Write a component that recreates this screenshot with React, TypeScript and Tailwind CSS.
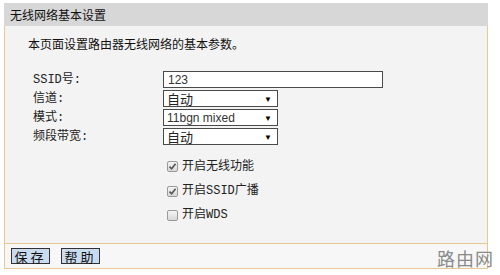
const cjk = "font-['Noto_Sans_CJK_SC',sans-serif]";
const mono = "font-['Liberation_Mono','Noto_Sans_CJK_SC',monospace]";

const Field = ({ label, children }: { label: string; children: React.ReactNode }) => (
  <div className="flex items-center h-[19px]">
    <span className={`w-[158px] shrink-0 pl-[28px] text-[12px] text-[#222] ${mono}`}>{label}</span>
    {children}
  </div>
);

const Select = ({ value, sans }: { value: string; sans?: boolean }) => (
  <div className="flex items-center justify-between w-[115px] h-[17px] border border-[#4a4a4a] bg-white pl-[3px] pr-[5px]">
    <span
      className={
        sans
          ? "text-[12px] text-[#333] font-['Liberation_Sans',sans-serif]"
          : `text-[13px] text-[#222] ${cjk}`
      }
    >
      {value}
    </span>
    <span className="text-[8px] text-black leading-none">▼</span>
  </div>
);

const Check = ({ label, on, h }: { label: string; on: boolean; h: string }) => (
  <div className={`flex items-center pl-[162px] ${h}`}>
    <span className="w-[11px] h-[11px] border border-[#9a9a9a] rounded-[2px] bg-gradient-to-b from-[#f4f4f4] to-[#d8d8d8] flex items-center justify-center">
      {on && (
        <svg width="9" height="9" viewBox="0 0 9 9">
          <path d="M1.5 4.6 L3.6 6.8 L7.6 1.8" stroke="#555" strokeWidth="1.6" fill="none" />
        </svg>
      )}
    </span>
    <span className={`ml-[4px] text-[12px] text-[#222] ${mono}`}>{label}</span>
  </div>
);

export default function App() {
  return (
    <div className="w-[500px] h-[275px] bg-white pt-[3px] pl-[4px] relative overflow-hidden">
      <div className="w-[484px]">
        {/* header */}
        <div className={`h-[23px] bg-[#d7d7d7] flex items-center pl-[6px] text-[12px] text-[#111] ${cjk}`}>
          无线网络基本设置
        </div>

        {/* content */}
        <div className="h-[218px] bg-[#f3f3f3] border-x border-b border-[#e6c894] pt-[10px]">
          <div className={`pl-[23px] text-[12px] leading-[16px] text-[#111] ${cjk}`}>
            本页面设置路由器无线网络的基本参数。
          </div>
          <div className="mt-[18px]">
            <Field label="SSID号:">
              <div className="w-[220px] h-[17px] border border-[#4a4a4a] bg-white pl-[4px] flex items-center text-[12px] text-[#333] font-['Liberation_Sans',sans-serif]">
                123
              </div>
            </Field>
            <Field label="信道:">
              <Select value="自动" />
            </Field>
            <Field label="模式:">
              <Select value="11bgn mixed" sans />
            </Field>
            <Field label="频段带宽:">
              <Select value="自动" />
            </Field>
          </div>
          <div className="mt-[8px]">
            <Check label="开启无线功能" on h="h-[25px]" />
            <Check label="开启SSID广播" on h="h-[24px]" />
            <Check label="开启WDS" on={false} h="h-[24px]" />
          </div>
        </div>

        {/* buttons */}
        <div className="h-[25px] bg-[#f7f7f7] border-x border-b border-[#e6c894] flex items-center gap-[11px] pl-[6px]">
          <button className={`w-[39px] h-[16px] bg-[#c9dcef] border border-[#333] text-[13px] leading-none tracking-[3px] text-[#111] ${cjk}`}>
            保存
          </button>
          <button className={`w-[39px] h-[16px] bg-[#c9dcef] border border-[#333] text-[13px] leading-none tracking-[3px] text-[#111] ${cjk}`}>
            帮助
          </button>
        </div>
      </div>

      {/* watermark */}
      <div className={`absolute left-[437px] top-[249px] text-[18px] leading-none tracking-[1px] text-[#8a8a8a] ${cjk}`}>
        路由网
      </div>
    </div>
  );
}
